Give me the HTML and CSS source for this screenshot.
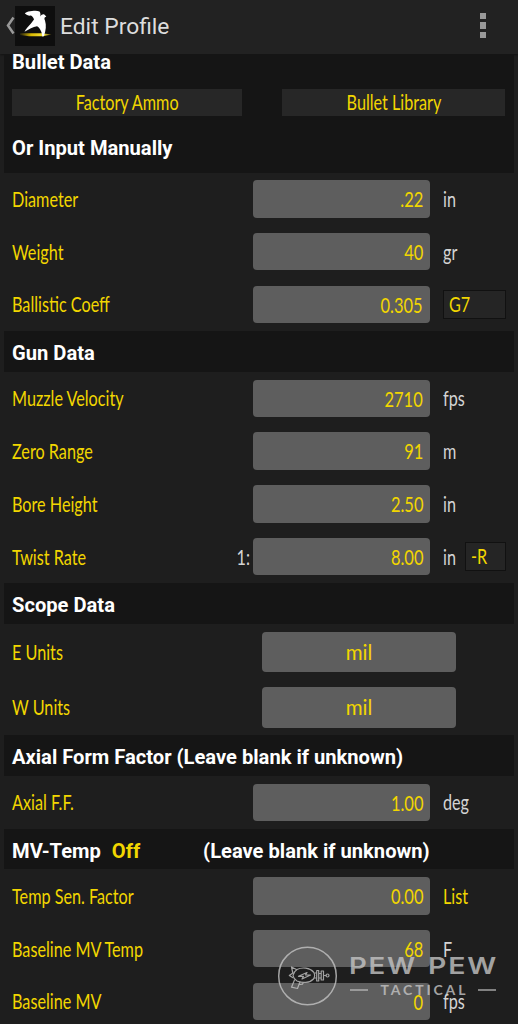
FILE: index.html
```html
<!doctype html>
<html lang="en">
<head>
  <meta charset="utf-8" />
  <meta name="viewport" content="width=device-width, initial-scale=1"/>
  <title>Edit Profile</title>
  <meta name="color-scheme" content="dark">
  <link rel="stylesheet" href="styles.css">
</head>
<body>
  <header class="topbar">
    <svg class="back" viewBox="0 0 10 20"><path d="M8.500 1.500 3 9.500l5.500 8" /></svg>
    <svg class="logo" viewBox="0 0 40 40">
      <defs>
        <linearGradient id="perch"><stop offset="0" stop-color="#d8b800" stop-opacity=".1"/><stop offset=".35" stop-color="#d8b800"/><stop offset=".75" stop-color="#f7e23a"/><stop offset="1" stop-color="#f0d21a" stop-opacity=".3"/></linearGradient>
      </defs>
      <rect width="40" height="40" fill="#0e0e0e"/>
      <path d="M5 27.300h22l9.500 1.200-8.500 1.700H14l-9-1.200z" fill="url(#perch)"/>
      <path d="M9.800 7.200C12 5.700 14.500 5.400 17 5.100c3-.4 5.500-.3 7.500.3 1 1.300 1.100 3 .8 5 1-1.600 2.800-2.500 4-1.800l2 2-1.600.8c-.5 1-.2 2 .3 3.200 1.500 5 1 10-1.200 15.600l-1.500.2c-.2-2.600-.9-4.800-2-6.700-1-1.700-2-2.900-3.300-3.500-4 .8-8 3-12.500 5.500 1.500-3 4-5.800 6.500-8.300 1-1.100 2-2.600 3-3.900-.5-1.600-1.500-2.800-3-3.900-2.500.3-4.700-.4-6.200-2.400z" fill="#fff"/>
    </svg>
    <h1 class="title">Edit Profile</h1>
    <div class="more"><i></i><i></i><i></i></div>
  </header>

  <main>
    <section class="band band-tall">
      <h2>Bullet Data</h2>
      <div class="btns">
        <button class="btn"><span class="cond">Factory Ammo</span></button>
        <button class="btn"><span class="cond">Bullet Library</span></button>
      </div>
      <h2>Or Input Manually</h2>
    </section>
    <div class="row"><span class="label cond">Diameter</span><div class="field"><span class="cond">.22</span></div><span class="unit cond">in</span></div>
    <div class="row"><span class="label cond">Weight</span><div class="field"><span class="cond">40</span></div><span class="unit cond">gr</span></div>
    <div class="row"><span class="label cond">Ballistic Coeff</span><div class="field"><span class="cond">0.305</span></div><div class="pick"><span class="cond">G7</span></div></div>

    <section class="band"><h2>Gun Data</h2></section>
    <div class="row"><span class="label cond">Muzzle Velocity</span><div class="field"><span class="cond">2710</span></div><span class="unit cond">fps</span></div>
    <div class="row"><span class="label cond">Zero Range</span><div class="field"><span class="cond">91</span></div><span class="unit cond">m</span></div>
    <div class="row"><span class="label cond">Bore Height</span><div class="field"><span class="cond">2.50</span></div><span class="unit cond">in</span></div>
    <div class="row"><span class="label cond">Twist Rate</span><span class="ratio cond">1:</span><div class="field"><span class="cond">8.00</span></div><span class="unit cond">in</span><div class="pick pick-small"><span class="cond">-R</span></div></div>

    <section class="band"><h2>Scope Data</h2></section>
    <div class="row row-select"><span class="label cond">E Units</span><div class="select">mil</div></div>
    <div class="row row-select"><span class="label cond">W Units</span><div class="select">mil</div></div>

    <section class="band"><h2>Axial Form Factor (Leave blank if unknown)</h2></section>
    <div class="row"><span class="label cond">Axial F.F.</span><div class="field"><span class="cond">1.00</span></div><span class="unit cond">deg</span></div>

    <section class="band band-temp"><h2>MV-Temp</h2><h2 class="off">Off</h2><h2>(Leave blank if unknown)</h2></section>
    <div class="row"><span class="label cond">Temp Sen. Factor</span><div class="field"><span class="cond">0.00</span></div><span class="unit list cond">List</span></div>
    <div class="row"><span class="label cond">Baseline MV Temp</span><div class="field"><span class="cond">68</span></div><span class="unit cond">F</span></div>
    <div class="row"><span class="label cond">Baseline MV</span><div class="field"><span class="cond">0</span></div><span class="unit cond">fps</span></div>
  </main>

  <svg class="watermark" viewBox="0 0 222 62">
    <g fill="none" stroke="#c4c4c4" stroke-linejoin="round" stroke-linecap="round">
      <circle cx="30.500" cy="31" r="28.800" stroke-width="1.500"/>
      <g stroke-width="1.200">
        <path d="M20 24.500c5-2.600 13-1.800 16.500 2.500 1.300 2 1.300 5 0 7-3.500 4-11.500 4.300-16.500 2-2-1.200-3.500-3-4-5.500.5-2.700 2-4.700 4-6z"/>
        <path d="m19.500 24.500-5-2.500 1.200 5.500M15.800 28l-3.500 2.500 3.700 2.200M17.500 35l-3 7.200 6 1.300 2.500-6.700M23 39.500l2.500-.3.800-1.700"/>
        <path d="m30 27.500-8.500 3.800h5l-1.500 2.700 8.500-4h-5z"/>
        <path d="M37.500 28h2.200v5h-2.200M39.700 25.500h2v10.500h-2zM41.700 28.500h2.500v4.500h-2.500M44.200 26h2.300v9h-2.300zM46.500 30.500h2.500"/>
        <circle cx="50.500" cy="30.500" r="1.500"/>
      </g>
      <path d="M73 45h18M201 45h18" stroke-width="1.500" stroke-linecap="butt"/>
    </g>
    <text class="wm-name" x="72" y="29.300" textLength="68" lengthAdjust="spacingAndGlyphs">PEW</text>
    <text class="wm-name" x="151" y="29.300" textLength="70" lengthAdjust="spacingAndGlyphs">PEW</text>
    <text class="wm-sub" x="103.500" y="50" textLength="85">TACTICAL</text>
  </svg>
</body>
</html>
```
FILE: styles.css
```css
:root{ --bg:#1e1e1e; --bar:#222; --band:#151515; --field:#5e5e5e; --yellow:#f2d600; --fg:#fff; --unit:#d4d4d4; }
*,*::before,*::after{box-sizing:border-box}
html,body{height:100%}
body{margin:0;position:relative;overflow:hidden;background:var(--bg);color:var(--fg);font-family:Lato,"Liberation Sans",sans-serif;font-size:20.5px}
.topbar{height:54px;background:var(--bar);display:flex;align-items:center;padding:0 32px 3px 5px;box-shadow:0 1px 2px rgba(0,0,0,.4)}
.back{width:10px;height:20px;fill:none;stroke:#999;stroke-width:2.5}
.logo{width:40px;height:40px;margin-right:5px}
.title{flex:1;margin:0;font:400 22.8px/30px Roboto,sans-serif;color:#ddd;padding-top:2px}
.more{display:grid;gap:3px}
.more i{width:6.5px;height:6.5px;background:#999}

.band{height:41px;margin:0 4px;padding:3px 8px 0;background:var(--band);display:flex;align-items:center}
h2{margin:0;font:700 20.15px/24px Roboto,sans-serif;white-space:nowrap}
.band-tall{height:118.5px;padding-top:0;flex-direction:column;align-items:stretch}
.band-tall h2:first-child{margin-top:-4px}
.btns{display:flex;gap:40px;margin:15px 0 20px}
.btn{width:230px;height:27px;padding:0;border:0;background:#272727;color:var(--yellow);font:inherit;line-height:27px}
.btn + .btn{width:223px}
.band-temp{height:40.5px}
.off{color:var(--yellow);margin:0 63px 0 11px}

.row{height:52.8px;padding:0 12px;display:grid;grid-template-columns:209px 32px 177px 1fr auto;align-items:center}
.label,.field,.pick,.select{color:var(--yellow)}
.label{grid-column:1;white-space:nowrap}
.ratio{grid-column:2;justify-self:end;margin-right:3px;color:var(--unit)}
.field{grid-column:3;height:37.5px;border-radius:4px;background:var(--field);padding-right:7px;text-align:right;line-height:37px;font-size:21px}
.unit{grid-column:4;margin-left:13px;color:var(--unit)}
.list{color:var(--yellow)}
.pick{grid-column:4;width:63px;height:29px;margin-left:13px;padding-left:5px;border:1px solid #111;background:#252525;line-height:27px}
.pick-small{grid-column:5;width:41px;margin-left:0}
.row-select{height:55.5px;grid-template-columns:250px 194px}
.select{grid-column:2;height:40.5px;border-radius:4px;background:var(--field);text-align:center;line-height:41px}

/* condensed face for labels and values, kept above the watermark */
.cond{display:inline-block;position:relative;z-index:1;transform:scaleX(.79);transform-origin:left center}
.field .cond,.ratio{transform-origin:right center}
.field .cond{transform:scaleX(.785)}
.btn .cond{transform-origin:center}

.watermark{position:absolute;left:277px;top:945px;width:222px;height:62px;opacity:.8}
.watermark text{fill:#c4c4c4}
.wm-name{font:600 23.5px Inter,sans-serif;letter-spacing:1.5px}
.wm-sub{font:700 14px Lato,sans-serif}
```
